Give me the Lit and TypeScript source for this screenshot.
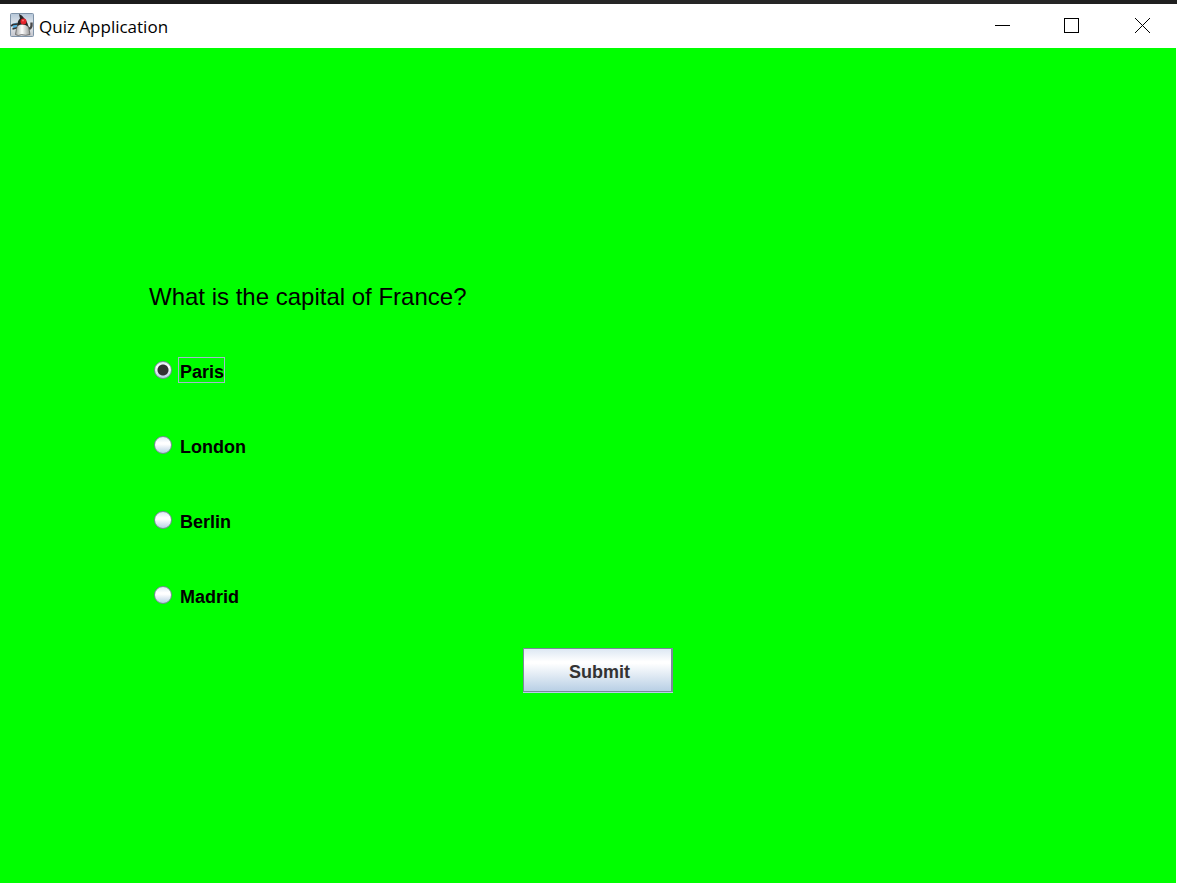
import { LitElement, html, css, svg } from "lit";
import { customElement, state } from "lit/decorators.js";

@customElement("duke-icon")
class DukeIcon extends LitElement {
  static styles = css`
    :host { display: block; width: 24px; height: 24px; }
    svg { display: block; }
  `;

  render() {
    return html`<svg width="24" height="24" viewBox="0 0 24 24" aria-hidden="true">
      <defs>
        <linearGradient id="bg" x1="0" y1="0" x2="0" y2="1">
          <stop offset="0" stop-color="#b4c6d8" />
          <stop offset="0.5" stop-color="#e6e9ee" />
          <stop offset="1" stop-color="#c3c5cc" />
        </linearGradient>
        <linearGradient id="body" x1="0" y1="0" x2="1" y2="0">
          <stop offset="0" stop-color="#a5a5a5" />
          <stop offset="0.45" stop-color="#ffffff" />
          <stop offset="1" stop-color="#969696" />
        </linearGradient>
      </defs>
      <rect x="0.5" y="0.5" width="23" height="23" rx="1" fill="url(#bg)" stroke="#7f93a8" />
      <path d="M2 11 L7 9.500 L8 14 L3 15.500 Z" fill="#58aede" />
      <path d="M1 13 L3 11.500 L8 11 M2.500 16 L8 14.500" fill="none" stroke="#333" stroke-width="1.600" />
      <path d="M17 13 Q20 18 21.500 13 L21.500 9.500" fill="none" stroke="#4a4a4a" stroke-width="2.400" />
      <path d="M8 11 Q6 16 5.500 21.500 Q8 23.500 11.500 21.500 Q16 23 20 21.500 Q19.500 14 16 9 Z" fill="url(#body)" stroke="#555" stroke-width="0.700" />
      <path d="M9 1 Q12 2 14 5 Q17.500 8 18 13.500 Q13 10 7.500 13 Q7 8 10 5.500 Z" fill="#292525" />
      <circle cx="13.500" cy="8.500" r="3" fill="#e5232b" />
      <circle cx="13" cy="7.500" r="1" fill="#ff6b69" />
    </svg>`;
  }
}

@customElement("title-bar")
class TitleBar extends LitElement {
  static styles = css`
    :host {
      display: flex;
      align-items: center;
      height: 44px;
      padding-left: 10px;
      background: #fff;
      color: #000;
    }
    duke-icon { margin-bottom: 2px; }
    .title {
      flex: 1;
      margin: 0 0 0 5px;
      padding-top: 2px;
      font: 400 17px/24px "Open Sans", "Noto Sans", sans-serif;
    }
    .controls { display: flex; height: 44px; }
    button {
      display: grid;
      place-items: center;
      width: 70px;
      height: 44px;
      padding: 0;
      border: 0;
      background: none;
    }
    svg { display: block; fill: none; stroke: #000; }
  `;

  private control(name: string, shape: unknown) {
    return html`<button type="button" aria-label=${name}>
      <svg width="16" height="16" viewBox="0 0 16 16">${shape}</svg>
    </button>`;
  }

  render() {
    return html`
      <duke-icon></duke-icon>
      <h1 class="title">Quiz Application</h1>
      <div class="controls">
        ${this.control("Minimize", svg`<path d="M1 7.5H16" />`)}
        ${this.control("Maximize", svg`<rect x="0.5" y="0.5" width="14" height="14" />`)}
        ${this.control("Close", svg`<path d="M1 0L16 15M16 0L1 15" />`)}
      </div>
    `;
  }
}

@customElement("quiz-form")
class QuizForm extends LitElement {
  static styles = css`
    :host {
      display: block;
      box-sizing: border-box;
      padding: 211px 0 0 149px;
      background: #00ff00;
      font-family: "Liberation Sans", Arial, sans-serif;
    }
    fieldset { margin: 0; padding: 0; border: 0; }
    legend {
      padding: 0;
      font-size: 24px;
      line-height: 75px;
      color: #000;
    }
    .option {
      display: flex;
      align-items: center;
      width: fit-content;
      height: 75px;
      padding-left: 5px;
      font-size: 18px;
      line-height: 20px;
      font-weight: 700;
      color: #000;
    }
    input {
      appearance: none;
      box-sizing: border-box;
      width: 18px;
      height: 18px;
      margin: 0 6px 4px 0;
      border: 1px solid #7a8a99;
      border-radius: 50%;
      outline: none;
      background: linear-gradient(#dde8f3, #ffffff 35%, #ffffff 45%, #b8cfe5);
    }
    input:checked {
      background:
        radial-gradient(circle, #333 5px, transparent 6px),
        linear-gradient(#dde8f3, #ffffff 30%, #b8cfe5);
    }
    .name {
      margin-bottom: 4px;
      padding: 4px 0 0 1px;
      border: 1px solid transparent;
    }
    input:checked + .name { border-color: #a3b8cc; }
    .actions { display: flex; align-items: center; height: 75px; padding-left: 374px; }
    .submit {
      width: 150px;
      height: 44px;
      margin-bottom: 4px;
      padding: 5px 0 0 4px;
      border: 1px solid #7a8a99;
      border-right-width: 2px;
      border-radius: 0;
      box-shadow: 0 1px #b8cfe5;
      background: linear-gradient(#dde8f3, #ffffff 30%, #ffffff 34%, #b8cfe5);
      font: 700 18px/24px "Liberation Sans", Arial, sans-serif;
      color: #333;
    }
  `;

  @state() private choice = "Paris";

  private options = ["Paris", "London", "Berlin", "Madrid"];

  render() {
    return html`<form @submit=${(e: Event) => e.preventDefault()}>
      <fieldset>
        <legend>What is the capital of France?</legend>
        ${this.options.map(
          (name) => html`<label class="option">
            <input type="radio" name="answer" .value=${name} .checked=${this.choice === name}
              @change=${() => (this.choice = name)} />
            <span class="name">${name}</span>
          </label>`
        )}
      </fieldset>
      <div class="actions"><button class="submit" type="submit">Submit</button></div>
    </form>`;
  }
}

@customElement("app-root")
class AppRoot extends LitElement {
  static styles = css`
    :host {
      display: flex;
      flex-direction: column;
      min-height: 100vh;
      background: #fff;
    }
    .backdrop { height: 4px; background: linear-gradient(90deg, #1c1c1c 340px, #262626 340px, #262626 calc(100% - 107px), #1f1f1f calc(100% - 107px)); }
    quiz-form { flex: 1; margin-right: 1px; }
  `;

  render() {
    return html`
      <div class="backdrop"></div>
      <title-bar></title-bar>
      <quiz-form></quiz-form>
    `;
  }
}
